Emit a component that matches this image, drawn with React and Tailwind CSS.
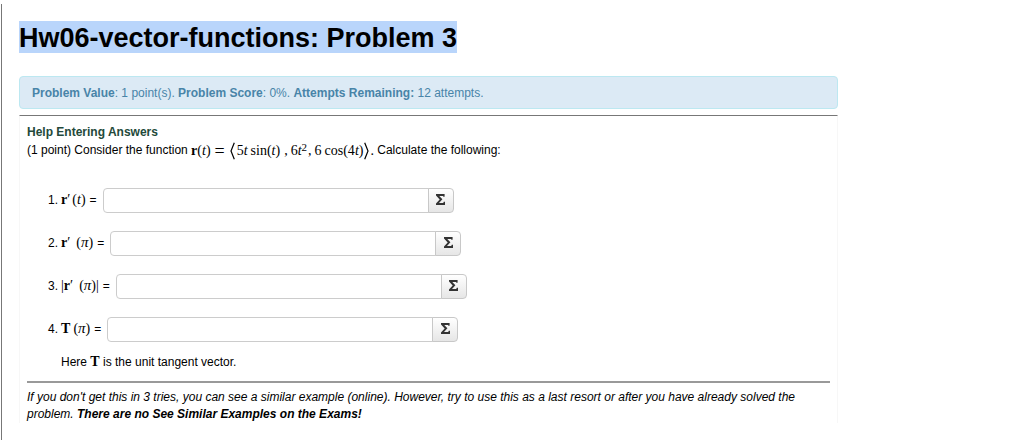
import React from "react";

function Formula({ children, className = "" }) {
  return (
    <span className={`whitespace-nowrap font-['Liberation_Serif',serif] text-[14px] leading-none ${className}`}>
      {children}
    </span>
  );
}

function Pi() {
  return <i className="text-[15px] leading-none">π</i>;
}

function AnswerRow({ id, number, label }) {
  return (
    <li className="flex h-[25px] items-center">
      <label htmlFor={id} className="flex items-baseline whitespace-nowrap pr-[6px]">
        <span className="pr-[3px]">{number}.</span>
        {label}
        <span className="pl-[4px]">=</span>
      </label>
      <input
        id={id}
        type="text"
        className="h-[25px] w-[326px] rounded-l-[4px] border border-[#cccccc] bg-white px-[5px] outline-none"
      />
      <button
        type="button"
        aria-label="Open equation editor"
        className="-ml-px flex h-[25px] w-[26px] items-center justify-center rounded-r-[4px] border border-[#c8c8c8] bg-linear-to-b from-white to-[#e6e6e6] pb-[2px]"
      >
        <svg viewBox="0 0 9 11" className="h-[11px] w-[9px]" aria-hidden="true">
          <path d="M0 0h8.6v2.8H7.4L7 1.9H3.3L6.4 5.3 3 8.9h4.2l.6-1.1H9V11H0V9.6l3.7-4.1L0 1.5z" fill="#333333" />
        </svg>
      </button>
    </li>
  );
}

const rows = [
  {
    id: "answer-1",
    label: (
      <Formula>
        <b>r</b>′<span className="pl-[2px]">(<i>t</i>)</span>
      </Formula>
    ),
  },
  {
    id: "answer-2",
    label: (
      <Formula>
        <b>r</b>′<span className="pl-[6px]">(<Pi />)</span>
      </Formula>
    ),
  },
  {
    id: "answer-3",
    label: (
      <Formula>
        |<b>r</b>′<span className="pl-[6px]">(<Pi />)|</span>
      </Formula>
    ),
  },
  {
    id: "answer-4",
    label: (
      <Formula>
        <b>T</b><span className="pl-[3px]">(<Pi />)</span>
      </Formula>
    ),
  },
];

export default function App() {
  return (
    <div className="min-h-screen bg-white pl-px pt-[4px] font-['Liberation_Sans',Arial,sans-serif] text-[12px] leading-[17px] text-black">
      <main className="min-h-[436px] border-l border-[#777777] pl-[17px] pr-[186px] pt-[17px]">
        <h1 className="flex text-[27px] font-bold leading-[30px]">
          <span className="bg-[#b9d5fb] pt-[2px]">Hw06-vector-functions: Problem 3</span>
        </h1>
        <div className="mt-[23px] rounded-[4px] border border-[#bce8f1] bg-[#dceaf5] px-[12px] pb-[6px] pt-[8px] text-[#4884a8]">
          <b>Problem Value</b>: 1 point(s). <b>Problem Score</b>: 0%. <b>Attempts Remaining:</b> 12 attempts.
        </div>
        <section className="mt-[6px] border-x border-t border-x-[#f7f7f7] border-t-[#777777] px-[7px] pt-[8px]">
          <a href="#help" className="block font-bold text-[#23493a]">Help Entering Answers</a>
          <p className="flex h-[19px] items-center whitespace-pre">
            <span>(1 point) Consider the function </span>
            <Formula className="flex items-center">
              <span><b>r</b>(<i>t</i>)</span>
              <span className="px-[4px] text-[18px]">=</span>
              <svg viewBox="0 0 5 18" className="ml-px h-[18px] w-[5px]" aria-hidden="true">
                <path d="M4.3.7 1 9l3.3 8.3" fill="none" stroke="black" strokeWidth="1.2" />
              </svg>
              <span className="pl-[2px]">5<i>t</i></span>
              <span className="pl-[3px]">sin(<i>t</i>)</span>
              <span className="pl-[4px]">,</span>
              <span className="pl-[3px]">6<i>t</i></span>
              <span className="pb-[6px] text-[11px]">2</span>
              <span className="pl-px">,</span>
              <span className="pl-[3px]">6</span>
              <span className="pl-[3px]">cos(4<i>t</i>)</span>
              <svg viewBox="0 0 5 18" className="ml-px h-[18px] w-[5px]" aria-hidden="true">
                <path d="M.7.7 4 9 .7 17.3" fill="none" stroke="black" strokeWidth="1.2" />
              </svg>
              <span className="pl-px">.</span>
            </Formula>
            <span> Calculate the following:</span>
          </p>
          <ol className="mt-[28px] flex flex-col gap-[18px] pl-[21px]">
            {rows.map((row, index) => (
              <AnswerRow key={row.id} id={row.id} number={index + 1} label={row.label} />
            ))}
          </ol>
          <p className="mt-[12px] pl-[34px]">
            Here <Formula><b>T</b></Formula> is the unit tangent vector.
          </p>
          <hr className="mt-[10px] border-t-2 border-[#999999]" />
          <p className="mt-[6px] italic">
            If you don't get this in 3 tries, you can see a similar example (online). However, try to use this as a last resort or after you have already solved the problem. <b>There are no See Similar Examples on the Exams!</b>
          </p>
        </section>
      </main>
    </div>
  );
}
